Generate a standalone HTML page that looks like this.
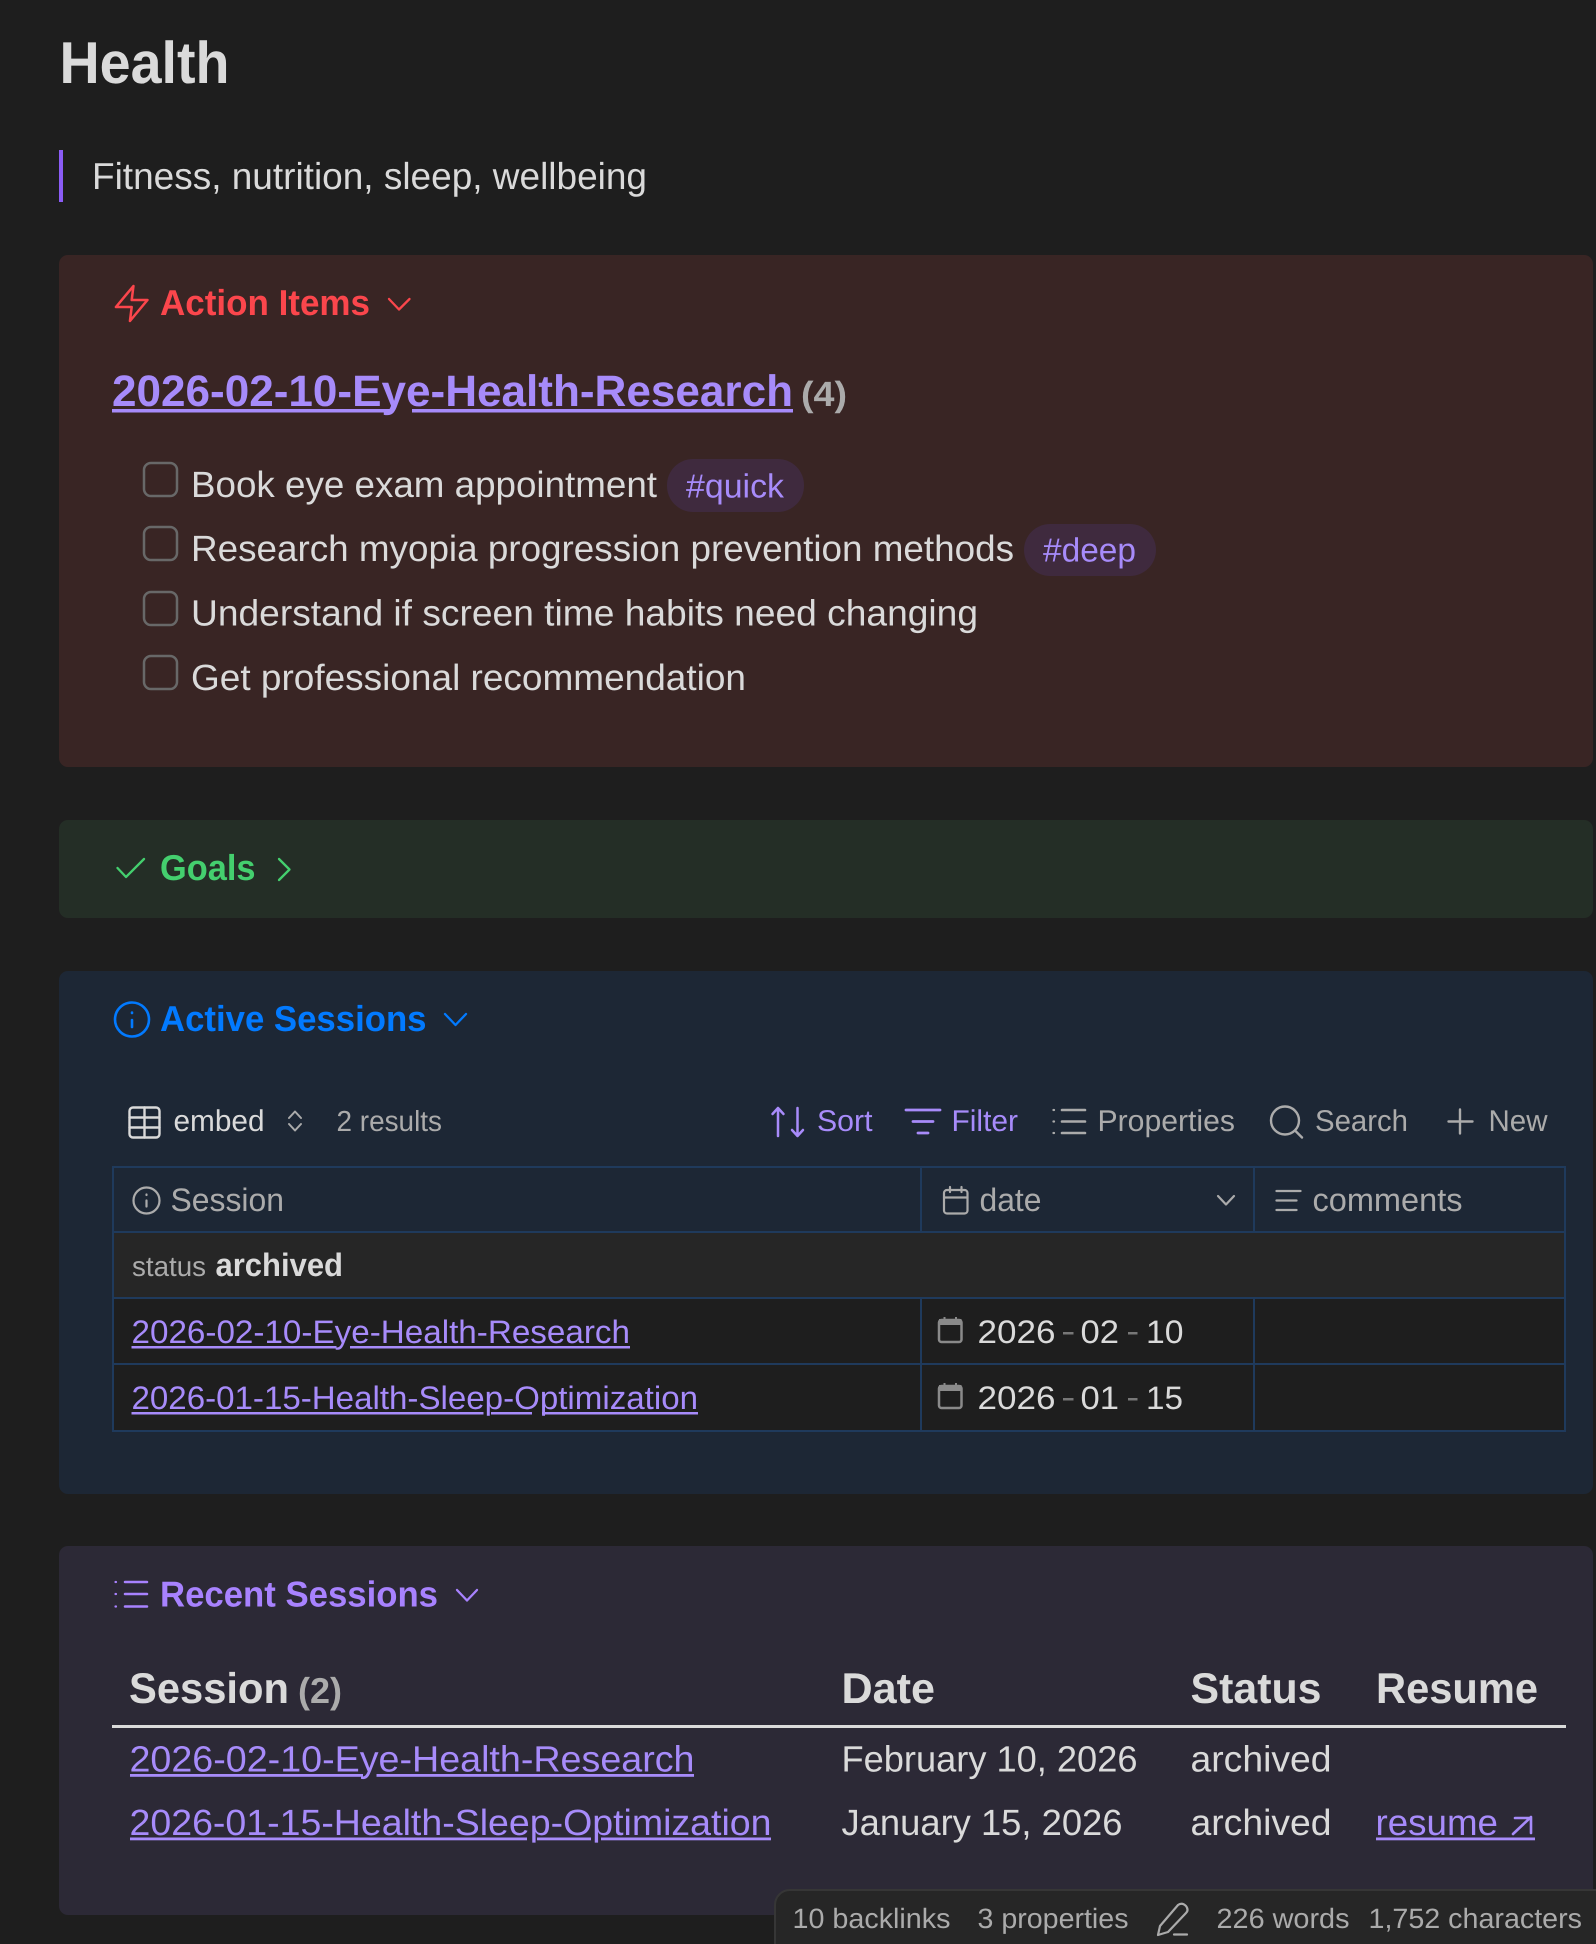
<!DOCTYPE html>
<html lang="en">
<head>
<meta charset="utf-8">
<title>Health</title>
<style>
html,body{margin:0;padding:0;background:#1e1e1e;width:1596px;height:1944px;overflow:hidden}
svg{display:block}
text{font-family:"Liberation Sans",sans-serif;text-rendering:geometricPrecision;fill:#dadada;white-space:pre}
.b{font-weight:700}
.g{fill:#ababab}
.p{fill:#a78bfa}
.ic{fill:none;stroke-linecap:round;stroke-linejoin:round}
</style>
</head>
<body>
<svg width="1596" height="1944" viewBox="0 0 1596 1944" xmlns="http://www.w3.org/2000/svg">
<rect width="1596" height="1944" fill="#1e1e1e"/>

<!-- Title -->
<text class="b" x="59.500" y="83" font-size="59" textLength="170" lengthAdjust="spacingAndGlyphs">Health</text>
<rect x="59" y="150" width="4" height="52" fill="#8b5cf6"/>
<text x="92" y="189" font-size="37.500" textLength="555" lengthAdjust="spacingAndGlyphs">Fitness, nutrition, sleep, wellbeing</text>

<!-- Action items -->
<rect x="59" y="255" width="1534" height="512" rx="9" fill="#392524"/>
<g transform="translate(110.7,282.5) scale(1.75)" class="ic" stroke="#fb464c" stroke-width="1.45"><path d="M13 2 3 14h9l-1 8 10-12h-9l1-8z"/></g>
<text class="b" x="160" y="315" font-size="36" textLength="210" lengthAdjust="spacingAndGlyphs" style="fill:#fb464c">Action Items</text>
<path class="ic" stroke="#fb464c" stroke-width="2.300" d="M389 299l10 10.500L409.500 299"/>
<text class="b p" x="112" y="406" font-size="44" textLength="681" lengthAdjust="spacingAndGlyphs">2026-02-10-Eye-Health-Research</text>
<rect x="112" y="409" width="281" height="3.500" fill="#a78bfa"/><rect x="412" y="409" width="381" height="3.500" fill="#a78bfa"/>
<text class="b g" x="801" y="406" font-size="35" textLength="46" lengthAdjust="spacingAndGlyphs">(4)</text>

<g fill="none" stroke="#686868" stroke-width="2.500">
<rect x="144" y="463" width="33" height="33" rx="7"/>
<rect x="144" y="527" width="33" height="33" rx="7"/>
<rect x="144" y="592" width="33" height="33" rx="7"/>
<rect x="144" y="656" width="33" height="33" rx="7"/>
</g>
<text x="191" y="497" font-size="36.500" textLength="466" lengthAdjust="spacingAndGlyphs">Book eye exam appointment</text>
<rect x="667" y="459" width="137" height="53" rx="26" fill="#3f2a3e"/>
<text class="p" x="686" y="497.500" font-size="33.500" textLength="98" lengthAdjust="spacingAndGlyphs">#quick</text>
<text x="191" y="561" font-size="36.500" textLength="823" lengthAdjust="spacingAndGlyphs">Research myopia progression prevention methods</text>
<rect x="1024" y="524" width="132" height="52" rx="26" fill="#3f2a3e"/>
<text class="p" x="1043" y="561.500" font-size="33.500" textLength="93" lengthAdjust="spacingAndGlyphs">#deep</text>
<text x="191" y="625.500" font-size="36.500" textLength="787" lengthAdjust="spacingAndGlyphs">Understand if screen time habits need changing</text>
<text x="191" y="690" font-size="36.500" textLength="555" lengthAdjust="spacingAndGlyphs">Get professional recommendation</text>

<!-- Goals -->
<rect x="59" y="820" width="1534" height="98" rx="9" fill="#242e26"/>
<path class="ic" stroke="#44cf6e" stroke-width="2.300" d="M117.500 868l8.500 9 18-18"/>
<text class="b" x="160" y="880" font-size="36" textLength="95.500" lengthAdjust="spacingAndGlyphs" style="fill:#44cf6e">Goals</text>
<path class="ic" stroke="#44cf6e" stroke-width="2.300" d="M279 859l10.500 10.500L279 880"/>

<!-- Active Sessions -->
<rect x="59" y="971" width="1534" height="523" rx="9" fill="#1d2735"/>
<g stroke="#027aff" class="ic" stroke-width="2.600"><circle cx="132" cy="1019.500" r="17"/><path d="M132 1027v-7M132 1012.500v.5"/></g>
<text class="b" x="160" y="1031" font-size="36" textLength="266.500" lengthAdjust="spacingAndGlyphs" style="fill:#027aff">Active Sessions</text>
<path class="ic" stroke="#027aff" stroke-width="2.300" d="M445 1014l10.500 11L466 1014"/>

<!-- Toolbar -->
<g class="ic" stroke="#dadada" stroke-width="2.400"><rect x="129.500" y="1107.500" width="30" height="30" rx="3.500"/><path d="M129.500 1117.500h30M129.500 1127.500h30M144.500 1107.500v30"/></g>
<text x="173.500" y="1131" font-size="30" textLength="91" lengthAdjust="spacingAndGlyphs">embed</text>
<path class="ic" stroke="#ababab" stroke-width="2" d="M289 1118l6 -6.500 6 6.500M289 1124l6 6.500 6-6.500"/>
<text class="g" x="336.500" y="1131" font-size="29" textLength="105.500" lengthAdjust="spacingAndGlyphs">2 results</text>

<path class="ic" stroke="#a88bfa" stroke-width="2.500" d="M778 1136v-28M772.500 1114l5.500-6 5.500 6M797.500 1108v28M792 1130l5.500 6 5.500-6"/>
<text class="p" x="817" y="1131" font-size="30" textLength="55.500" lengthAdjust="spacingAndGlyphs">Sort</text>
<path class="ic" stroke="#a88bfa" stroke-width="2.800" d="M906 1110h34M913 1121.500h20M918 1133h10"/>
<text class="p" x="951.500" y="1131" font-size="30" textLength="66.500" lengthAdjust="spacingAndGlyphs">Filter</text>
<path class="ic" stroke="#ababab" stroke-width="2.600" d="M1062 1110h23M1062 1121.500h23M1062 1133h23"/>
<path class="ic" stroke="#ababab" stroke-width="2.300" d="M1053.500 1110h.5M1053.500 1121.500h.5M1053.500 1133h.5"/>
<text class="g" x="1097.500" y="1131" font-size="30" textLength="137.500" lengthAdjust="spacingAndGlyphs">Properties</text>
<g class="ic" stroke="#ababab" stroke-width="2.400"><circle cx="1285" cy="1120.500" r="14"/><path d="M1295.500 1131l6.500 6.500"/></g>
<text class="g" x="1315" y="1131" font-size="30" textLength="93" lengthAdjust="spacingAndGlyphs">Search</text>
<path class="ic" stroke="#ababab" stroke-width="2.400" d="M1460 1109.500v24M1448.500 1121.500h24"/>
<text class="g" x="1488.500" y="1131" font-size="30" textLength="59" lengthAdjust="spacingAndGlyphs">New</text>

<!-- Database table -->
<rect x="113" y="1232" width="1452" height="66" fill="#262626"/>
<rect x="113" y="1298" width="1452" height="133" fill="#1e1e1e"/>
<g stroke="#1f3a5c" stroke-width="2" fill="none">
<rect x="113" y="1167" width="1452" height="264"/>
<path d="M113 1232h1452M113 1298h1452M113 1364h1452"/>
<path d="M921 1167v65M1254 1167v65M921 1298v133M1254 1298v133"/>
</g>
<g class="ic" stroke="#ababab" stroke-width="2.200"><circle cx="146.500" cy="1200.500" r="13"/><path d="M146.500 1206.500v-6M146.500 1194.500v.5"/></g>
<text class="g" x="170.500" y="1211" font-size="32.500" textLength="113.500" lengthAdjust="spacingAndGlyphs">Session</text>
<g class="ic" stroke="#ababab" stroke-width="2.200"><rect x="944" y="1190" width="23.500" height="23.500" rx="3"/><path d="M950 1187v5M961.500 1187v5M944 1197.500h23.500"/></g>
<text class="g" x="979.500" y="1211" font-size="32.500" textLength="62" lengthAdjust="spacingAndGlyphs">date</text>
<path class="ic" stroke="#ababab" stroke-width="2.200" d="M1218 1196l8 8.500 8-8.500"/>
<path class="ic" stroke="#ababab" stroke-width="2.300" d="M1276.500 1191h24M1276.500 1200.500h20M1276.500 1210h20"/>
<text class="g" x="1312.500" y="1211" font-size="32.500" textLength="150" lengthAdjust="spacingAndGlyphs">comments</text>

<text class="g" x="132" y="1276" font-size="28" textLength="74" lengthAdjust="spacingAndGlyphs">status</text>
<text class="b" x="215.500" y="1276" font-size="32.500" textLength="127.500" lengthAdjust="spacingAndGlyphs">archived</text>

<text class="p" x="131.500" y="1343" font-size="32.500" textLength="498.500" lengthAdjust="spacingAndGlyphs">2026-02-10-Eye-Health-Research</text>
<rect x="131.500" y="1346" width="205" height="2.500" fill="#a78bfa"/><rect x="350" y="1346" width="280" height="2.500" fill="#a78bfa"/>
<text class="p" x="131.500" y="1409" font-size="32.500" textLength="566.500" lengthAdjust="spacingAndGlyphs">2026-01-15-Health-Sleep-Optimization</text>
<rect x="131.500" y="1412" width="352" height="2.500" fill="#a78bfa"/><rect x="491" y="1412" width="41" height="2.500" fill="#a78bfa"/><rect x="542" y="1412" width="156" height="2.500" fill="#a78bfa"/>

<g>
<rect x="939" y="1320" width="22.500" height="22" rx="2.500" fill="none" stroke="#8a8a8a" stroke-width="2.500"/>
<rect x="939" y="1319" width="22.500" height="6" fill="#8a8a8a"/>
<path d="M944.500 1317v3M956 1317v3" stroke="#8a8a8a" stroke-width="2"/>
<rect x="939" y="1386" width="22.500" height="22" rx="2.500" fill="none" stroke="#8a8a8a" stroke-width="2.500"/>
<rect x="939" y="1385" width="22.500" height="6" fill="#8a8a8a"/>
<path d="M944.500 1383v3M956 1383v3" stroke="#8a8a8a" stroke-width="2"/>
</g>
<text x="977.500" y="1343" font-size="32.500" textLength="78" lengthAdjust="spacingAndGlyphs">2026</text>
<rect x="1063" y="1332" width="10.500" height="2.500" fill="#777"/>
<text x="1080.500" y="1343" font-size="32.500" textLength="38.500" lengthAdjust="spacingAndGlyphs">02</text>
<rect x="1128" y="1332" width="9.500" height="2.500" fill="#777"/>
<text x="1146" y="1343" font-size="32.500" textLength="37.500" lengthAdjust="spacingAndGlyphs">10</text>
<text x="977.500" y="1409" font-size="32.500" textLength="78" lengthAdjust="spacingAndGlyphs">2026</text>
<rect x="1063" y="1398" width="10.500" height="2.500" fill="#777"/>
<text x="1080.500" y="1409" font-size="32.500" textLength="38.500" lengthAdjust="spacingAndGlyphs">01</text>
<rect x="1128" y="1398" width="9.500" height="2.500" fill="#777"/>
<text x="1146" y="1409" font-size="32.500" textLength="37" lengthAdjust="spacingAndGlyphs">15</text>

<!-- Recent Sessions -->
<rect x="59" y="1546" width="1534" height="369" rx="9" fill="#2c2936"/>
<path class="ic" stroke="#a882ff" stroke-width="2.500" d="M125 1582h22M125 1594h22M125 1606.500h22"/>
<path class="ic" stroke="#a882ff" stroke-width="2.200" d="M115.500 1582h.5M115.500 1594h.5M115.500 1606.500h.5"/>
<text class="b" x="160" y="1606.500" font-size="36" textLength="278" lengthAdjust="spacingAndGlyphs" style="fill:#a882ff">Recent Sessions</text>
<path class="ic" stroke="#a882ff" stroke-width="2.300" d="M457 1590l10 10.500 10-10.500"/>

<text class="b" x="129" y="1703" font-size="43" textLength="160" lengthAdjust="spacingAndGlyphs">Session</text>
<text class="b g" x="298" y="1703" font-size="36" textLength="44" lengthAdjust="spacingAndGlyphs">(2)</text>
<text class="b" x="841.500" y="1703" font-size="43" textLength="93.500" lengthAdjust="spacingAndGlyphs">Date</text>
<text class="b" x="1190.500" y="1703" font-size="43" textLength="131" lengthAdjust="spacingAndGlyphs">Status</text>
<text class="b" x="1376" y="1703" font-size="43" textLength="162" lengthAdjust="spacingAndGlyphs">Resume</text>
<rect x="112" y="1725" width="1454" height="3" fill="#dadada"/>

<text class="p" x="129.500" y="1771.500" font-size="36.500" textLength="565" lengthAdjust="spacingAndGlyphs">2026-02-10-Eye-Health-Research</text>
<rect x="130" y="1774" width="233" height="2.800" fill="#a78bfa"/><rect x="376.500" y="1774" width="317.500" height="2.800" fill="#a78bfa"/>
<text class="p" x="129.500" y="1835" font-size="36.500" textLength="642" lengthAdjust="spacingAndGlyphs">2026-01-15-Health-Sleep-Optimization</text>
<rect x="130" y="1837.500" width="397" height="2.800" fill="#a78bfa"/><rect x="537" y="1837.500" width="54" height="2.800" fill="#a78bfa"/><rect x="601" y="1837.500" width="170" height="2.800" fill="#a78bfa"/>

<text x="841.500" y="1771.500" font-size="36.500" textLength="296" lengthAdjust="spacingAndGlyphs">February 10, 2026</text>
<text x="1190.500" y="1771.500" font-size="36.500" textLength="141" lengthAdjust="spacingAndGlyphs">archived</text>
<text x="841.500" y="1835" font-size="36.500" textLength="281" lengthAdjust="spacingAndGlyphs">January 15, 2026</text>
<text x="1190.500" y="1835" font-size="36.500" textLength="141" lengthAdjust="spacingAndGlyphs">archived</text>
<text class="p" x="1375.500" y="1835" font-size="36.500" textLength="122.500" lengthAdjust="spacingAndGlyphs">resume</text>
<path class="ic" stroke="#a78bfa" stroke-width="2.600" d="M1513 1834l18-17M1515 1818h16v15"/>
<rect x="1376" y="1837.500" width="159" height="2.800" fill="#a78bfa"/>

<!-- Status bar -->
<path d="M775 1945V1905a15 15 0 0 1 15-15H1597V1945Z" fill="#262626" stroke="#363636" stroke-width="2"/>
<text class="g" x="792.500" y="1928" font-size="28" textLength="158" lengthAdjust="spacingAndGlyphs">10 backlinks</text>
<text class="g" x="977.500" y="1928" font-size="28" textLength="151" lengthAdjust="spacingAndGlyphs">3 properties</text>
<path class="ic" stroke="#ababab" stroke-width="2.200" d="M1160 1926L1178 1905Q1182 1902 1186 1906Q1189 1910 1186 1913L1168 1932L1158 1935ZM1174 1934.500h13"/>
<text class="g" x="1216.500" y="1928" font-size="28" textLength="133" lengthAdjust="spacingAndGlyphs">226 words</text>
<text class="g" x="1368.500" y="1928" font-size="28" textLength="213.500" lengthAdjust="spacingAndGlyphs">1,752 characters</text>
</svg>
</body>
</html>
